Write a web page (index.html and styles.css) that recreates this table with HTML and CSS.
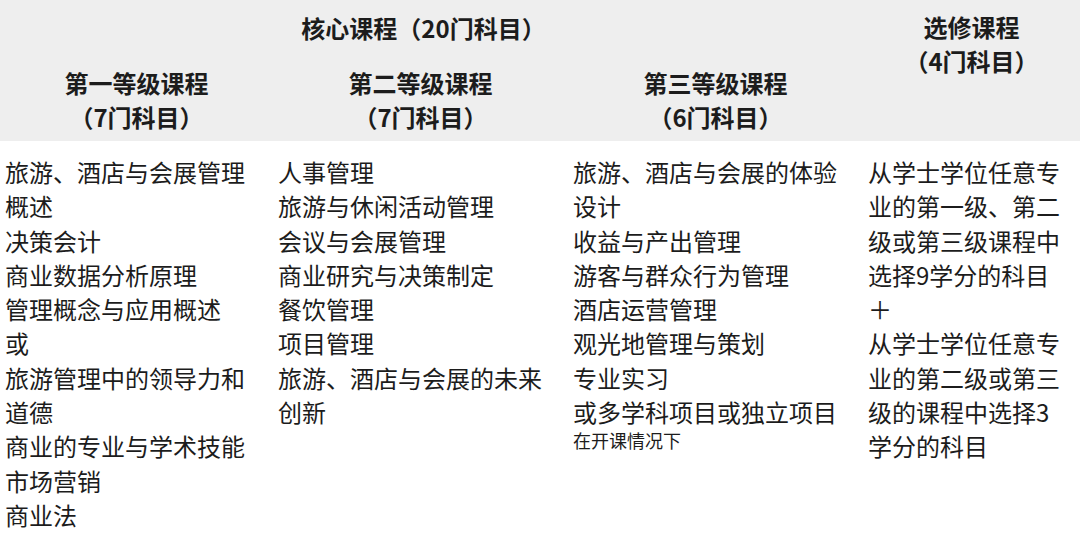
FILE: index.html
```html
<!DOCTYPE html>
<html lang="zh-CN">
<head>
<meta charset="utf-8">
<title>课程</title>
<link rel="stylesheet" href="styles.css">
</head>
<body>
<div class="table">
  <div class="head title">核心课程（20门科目）</div>
  <div class="head elective">选修课程<br>（4门科目）</div>
  <div class="head level level-1">第一等级课程<br>（7门科目）</div>
  <div class="head level level-2">第二等级课程<br>（7门科目）</div>
  <div class="head level level-3">第三等级课程<br>（6门科目）</div>

  <div class="cell">
    <div class="item">旅游、酒店与会展管理概述</div>
    <div class="item">决策会计</div>
    <div class="item">商业数据分析原理</div>
    <div class="item">管理概念与应用概述</div>
    <div class="item">或</div>
    <div class="item">旅游管理中的领导力和道德</div>
    <div class="item">商业的专业与学术技能</div>
    <div class="item">市场营销</div>
    <div class="item">商业法</div>
  </div>
  <div class="cell">
    <div class="item">人事管理</div>
    <div class="item">旅游与休闲活动管理</div>
    <div class="item">会议与会展管理</div>
    <div class="item">商业研究与决策制定</div>
    <div class="item">餐饮管理</div>
    <div class="item">项目管理</div>
    <div class="item">旅游、酒店与会展的未来创新</div>
  </div>
  <div class="cell">
    <div class="item">旅游、酒店与会展的体验设计</div>
    <div class="item">收益与产出管理</div>
    <div class="item">游客与群众行为管理</div>
    <div class="item">酒店运营管理</div>
    <div class="item">观光地管理与策划</div>
    <div class="item">专业实习</div>
    <div class="item">或多学科项目或独立项目</div>
    <div class="note">在开课情况下</div>
  </div>
  <div class="cell">
    <div class="item">从学士学位任意专业的第一级、第二级或第三级课程中选择9学分的科目</div>
    <div class="item">＋</div>
    <div class="item">从学士学位任意专业的第二级或第三级的课程中选择3学分的科目</div>
  </div>
</div>
</body>
</html>
```

FILE: styles.css
```css
html, body {
  margin: 0;
  padding: 0;
  background: #ffffff;
}

body {
  font-family: "Noto Sans CJK SC", "Noto Sans", sans-serif;
  color: #1c1c1c;
  font-size: 24px;
  line-height: 34.3px;
}

.table {
  display: grid;
  grid-template-columns: 273px 295px 295px 217px;
  grid-template-rows: auto auto auto;
}

.head {
  background: #eeeeee;
  font-weight: 700;
  text-align: center;
  line-height: 34px;
}

.title {
  grid-column: 1 / 4;
  grid-row: 1;
  padding: 11px 16px 0 0;
}

.elective {
  grid-column: 4;
  grid-row: 1 / 3;
  padding: 10px 0 0 0;
}

.level {
  grid-row: 2;
  padding: 21px 0 7px 0;
}

.level-1 {
  grid-column: 1;
}

.level-2 {
  grid-column: 2;
}

.level-3 {
  grid-column: 3;
}

.cell {
  grid-row: 3;
  padding: 14px 10px 0 5px;
}

.note {
  font-size: 18px;
  line-height: 22px;
}
```
